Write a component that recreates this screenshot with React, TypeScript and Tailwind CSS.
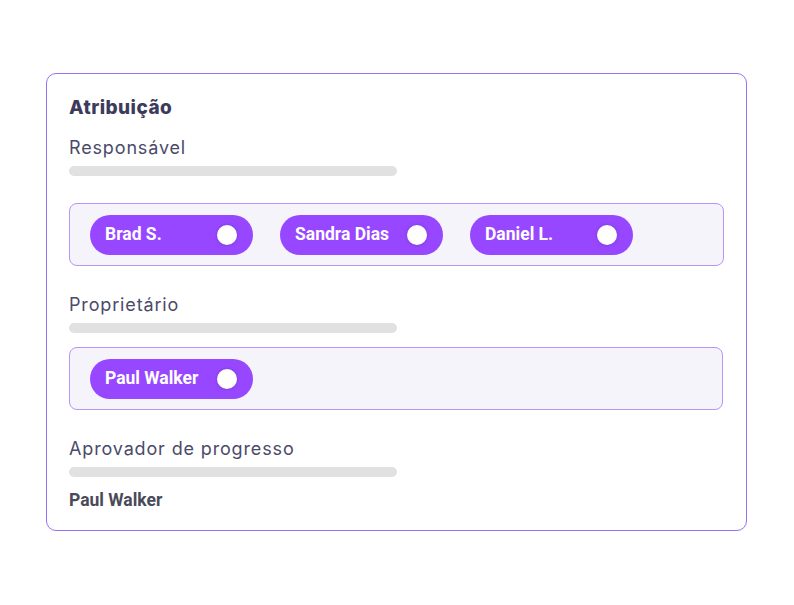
import React from "react";

const Chip = ({ name }: { name: string }) => (
  <div className="flex h-[40px] w-[163px] items-center justify-between rounded-full bg-[#9747ff] pl-[15px] pr-[16px]">
    <span className="text-[17.5px] font-bold text-white" style={{ fontFamily: "Roboto, sans-serif" }}>
      {name}
    </span>
    <span className="h-[20px] w-[20px] rounded-full bg-white shadow-[0_0_2px_1px_rgba(120,60,200,0.5)]" />
  </div>
);

const Label = ({ text, className = "" }: { text: string; className?: string }) => (
  <div className={`text-[18px] leading-[24px] tracking-[0.85px] text-[#4b4a6a] ${className}`}>{text}</div>
);

const Bar = ({ className = "" }: { className?: string }) => (
  <div className={`h-[10px] w-[328px] rounded-full bg-[#e1e1e1] ${className}`} />
);

export default function App() {
  return (
    <div className="h-[605px] w-[794px] bg-white pl-[46px] pt-[73px]" style={{ fontFamily: "Inter, sans-serif" }}>
      <div className="flex h-[458px] w-[701px] flex-col rounded-[10px] border border-[#9b70f0] px-[22px] pt-[20px]">
        <div className="text-[19px] font-extrabold leading-[27px] tracking-[0.45px] text-[#3d3b5c]">Atribuição</div>
        <Label text="Responsável" className="mt-[15px]" />
        <Bar className="mt-[6px]" />
        <div className="mt-[27px] flex h-[63px] w-[655px] items-center gap-[27px] rounded-[8px] border-[1.5px] border-[#bb93f6] bg-[#f5f4fa] pl-[20px]">
          <Chip name="Brad S." />
          <Chip name="Sandra Dias" />
          <Chip name="Daniel L." />
        </div>
        <Label text="Proprietário" className="mt-[27px]" />
        <Bar className="mt-[6px]" />
        <div className="mt-[14px] flex h-[63px] w-[654px] items-center rounded-[8px] border-[1.5px] border-[#bb93f6] bg-[#f5f4fa] pl-[20px]">
          <Chip name="Paul Walker" />
        </div>
        <Label text="Aprovador de progresso" className="mt-[27px]" />
        <Bar className="mt-[6px]" />
        <div className="mt-[13px] text-[17.5px] font-bold leading-[20px] text-[#4a4a5a]" style={{ fontFamily: "Roboto, sans-serif" }}>
          Paul Walker
        </div>
      </div>
    </div>
  );
}
